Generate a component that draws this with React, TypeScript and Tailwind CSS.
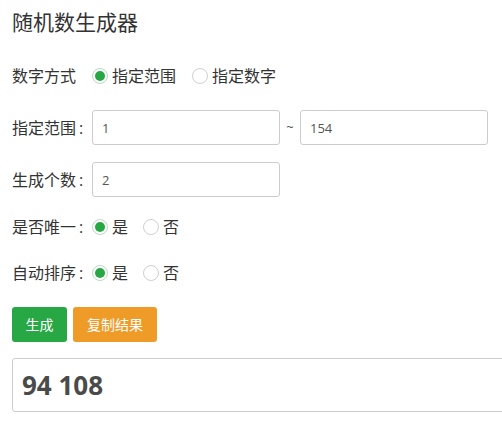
import React from "react";

const font = { fontFamily: '"Open Sans", "Noto Sans CJK SC", sans-serif' };

function Radio({ checked }: { checked?: boolean }) {
  return (
    <span
      className={
        "flex h-[16px] w-[16px] shrink-0 items-center justify-center rounded-full border bg-white " +
        (checked ? "border-[#b9dcc1]" : "border-[#cfcfcf]")
      }
    >
      {checked && <span className="h-[10px] w-[10px] rounded-full bg-[#28a745]" />}
    </span>
  );
}

function RadioOpt({ checked, label, gapAfter }: { checked?: boolean; label: string; gapAfter: string }) {
  return (
    <label className={"flex items-center " + gapAfter}>
      <Radio checked={checked} />
      <span className="ml-[4px]">{label}</span>
    </label>
  );
}

function Label({ text, colon }: { text: string; colon?: boolean }) {
  return (
    <div className="flex w-[80px] items-center">
      <span>{text}</span>
      {colon && <span className="ml-[3px]">:</span>}
    </div>
  );
}

export default function App() {
  return (
    <div className="w-[502px] h-[433px] overflow-hidden bg-white text-[#333]" style={font}>
      <div className="px-3">
        <div className="h-[61px] pt-[7px] text-[21px] leading-[30px] text-[#333]">随机数生成器</div>

        <div className="flex h-[30px] items-center text-[16px]">
          <Label text="数字方式" />
          <RadioOpt checked label="指定范围" gapAfter="mr-[16px]" />
          <RadioOpt label="指定数字" gapAfter="" />
        </div>

        <div className="mt-[19px] flex h-[35px] items-center text-[16px]">
          <Label text="指定范围" colon />
          <input
            readOnly
            value="1"
            className="h-[35px] w-[188px] rounded-[3px] border border-[#ccc] px-[9px] text-[13px] text-[#555] outline-none"
          />
          <span className="w-[20px] text-center text-[13px] text-[#555]">~</span>
          <input
            readOnly
            value="154"
            className="h-[35px] w-[188px] rounded-[3px] border border-[#ccc] px-[9px] text-[13px] text-[#555] outline-none"
          />
        </div>

        <div className="mt-[17px] flex h-[35px] items-center text-[16px]">
          <Label text="生成个数" colon />
          <input
            readOnly
            value="2"
            className="h-[35px] w-[188px] rounded-[3px] border border-[#ccc] px-[9px] text-[13px] text-[#555] outline-none"
          />
        </div>

        <div className="mt-[15px] flex h-[30px] items-center text-[16px]">
          <Label text="是否唯一" colon />
          <RadioOpt checked label="是" gapAfter="mr-[15px]" />
          <RadioOpt label="否" gapAfter="" />
        </div>

        <div className="mt-[16px] flex h-[30px] items-center text-[16px]">
          <Label text="自动排序" colon />
          <RadioOpt checked label="是" gapAfter="mr-[15px]" />
          <RadioOpt label="否" gapAfter="" />
        </div>

        <div className="mt-[19px] flex h-[35px] gap-[6px]">
          <button className="h-[35px] w-[55px] rounded-[3px] bg-[#28a745] text-[14px] text-white">生成</button>
          <button className="h-[35px] w-[84px] rounded-[3px] bg-[#ef9b28] text-[14px] text-white">复制结果</button>
        </div>

        <div className="mt-[16px] flex h-[54px] w-[520px] items-center rounded-[3px] border border-[#ccc] px-[9px]">
          <span className="text-[26px] font-bold text-[#4a4a4a]">94 108</span>
        </div>
      </div>
    </div>
  );
}
